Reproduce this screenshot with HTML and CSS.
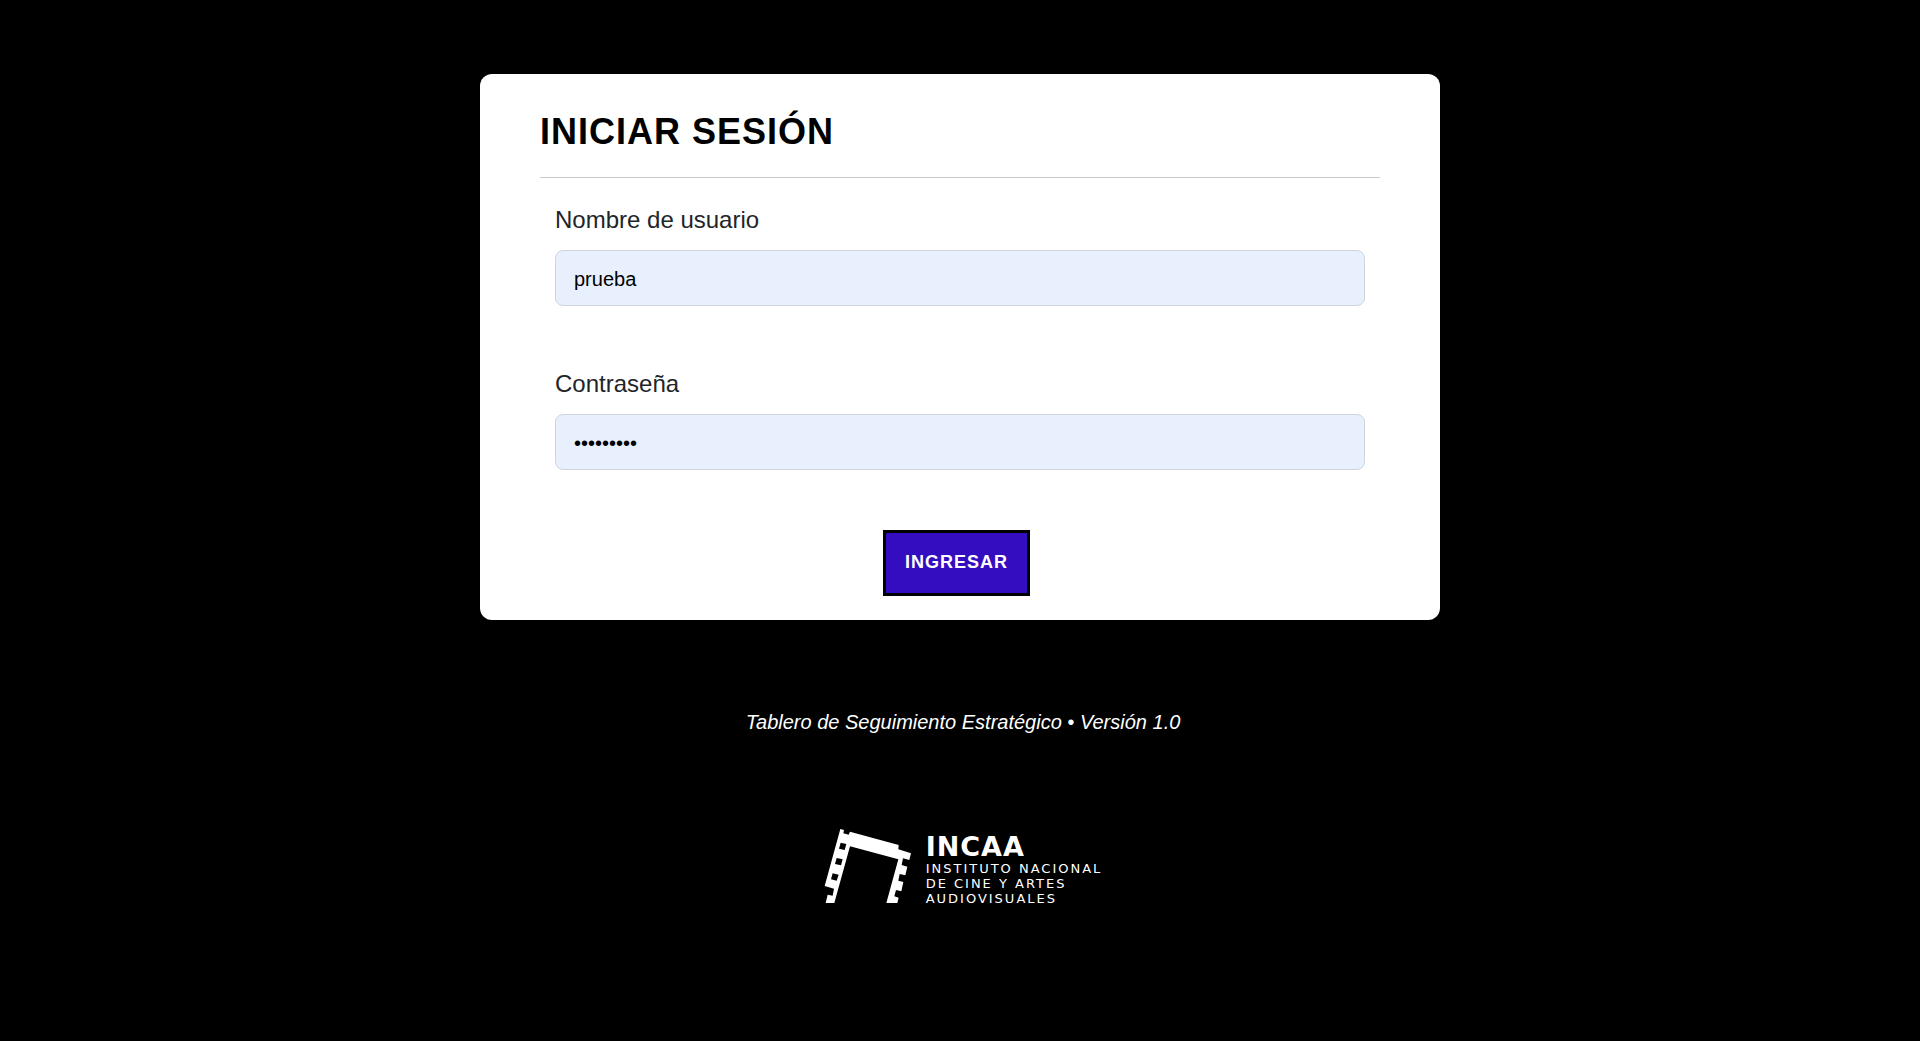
FILE: index.html
```html
<!DOCTYPE html>
<html lang="es">
<head>
<meta charset="utf-8">
<meta name="viewport" content="width=device-width, initial-scale=1">
<title>Iniciar sesión</title>
<link rel="stylesheet" href="styles.css">
</head>
<body>
<main class="card">
  <h1 class="card-title">INICIAR SESIÓN</h1>
  <form class="login-form">
    <div class="field">
      <label for="username">Nombre de usuario</label>
      <input id="username" name="username" type="text" value="prueba">
    </div>
    <div class="field">
      <label for="password">Contraseña</label>
      <input id="password" name="password" type="password" value="contrasen">
    </div>
    <div class="actions">
      <button class="submit" type="submit">INGRESAR</button>
    </div>
  </form>
</main>
<footer class="footer">
  <p class="tagline">Tablero de Seguimiento Estratégico • Versión 1.0</p>
  <div class="brand">
    <svg class="brand-mark" viewBox="48 45 261 225" aria-hidden="true">
      <path fill="#fff" fill-rule="evenodd" d="M97 45l11 3-2 10 16 4 4-9 146 40-1 13 38 12-5 20-19-5-4 20 17 5-6 26-17-4-4 20 15 4-6 28-16-4-5 19 13 4-4 16h-33l36-131-145-39-47 170H53l6-25 15 3 4-21-28-8zM98 86l-5 18 17 4 5-18zM86 132l-5 18 18 4 5-18zM74 178l-5 18 17 4 6-18z"/>
    </svg>
    <div class="brand-text">
      <strong class="brand-name">INCAA</strong>
      <span>INSTITUTO NACIONAL</span>
      <span>DE CINE Y ARTES</span>
      <span>AUDIOVISUALES</span>
    </div>
  </div>
</footer>
</body>
</html>
```
FILE: styles.css
```css
* {
  box-sizing: border-box;
}

body {
  margin: 0;
  padding-top: 74px;
  background: #000;
  color: #212529;
  font-family: "Liberation Sans", Arial, sans-serif;
}

.card {
  width: 50%;
  min-width: 320px;
  margin: 0 auto;
  padding: 32px 60px 24px;
  border-radius: 12px;
  background: #fff;
}

.card-title {
  margin: 0;
  padding: 4px 0 23px;
  border-bottom: 1px solid #c8c8c8;
  color: #000;
  font-size: 36px;
  line-height: 44px;
  letter-spacing: 1px;
}

.login-form {
  padding: 24px 15px 0;
}

.field {
  display: flex;
  flex-direction: column;
  gap: 12px;
  margin-bottom: 60px;
}

.field label {
  font-size: 24px;
  line-height: 36px;
}

.field input {
  width: 100%;
  height: 56px;
  padding: 2px 18px 0;
  border: 1px solid #ced4da;
  border-radius: 8px;
  background: #e8f0fe;
  color: #000;
  font-family: inherit;
  font-size: 20px;
}

.actions {
  display: flex;
  justify-content: center;
  padding-right: 7px;
}

.submit {
  height: 66px;
  padding: 0 19px 1px;
  border: 3px solid #000;
  background: #350dc0;
  color: #fff;
  font-family: inherit;
  font-size: 18px;
  font-weight: 700;
  letter-spacing: 1px;
}

.footer {
  display: flex;
  flex-direction: column;
  align-items: center;
  padding: 87px 0 40px 6px;
  color: #fff;
}

.tagline {
  margin: 0 0 92px;
  font-size: 20px;
  font-style: italic;
  line-height: 30px;
}

.brand {
  display: flex;
  gap: 15px;
}

.brand-mark {
  width: 87px;
  height: 75px;
}

.brand-text {
  display: flex;
  flex-direction: column;
  padding-top: 4px;
  font-family: "DejaVu Sans", sans-serif;
  font-size: 13px;
  line-height: 15px;
  letter-spacing: 2px;
}

.brand-name {
  font-size: 27px;
  line-height: 28px;
  letter-spacing: 1px;
}
```
